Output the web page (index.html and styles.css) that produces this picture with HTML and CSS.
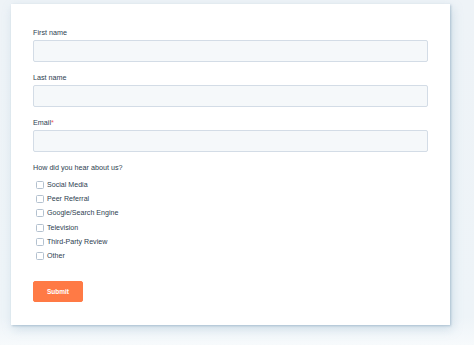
FILE: index.html
```html
<!DOCTYPE html>
<html>
<head>
<meta charset="utf-8">
<link rel="stylesheet" href="styles.css">
</head>
<body>
<div class="page">
  <form class="card">
    <div class="field">
      <label class="label">First name</label>
      <div class="input"></div>
    </div>
    <div class="field">
      <label class="label">Last name</label>
      <div class="input"></div>
    </div>
    <div class="field">
      <label class="label">Email<span class="req">*</span></label>
      <div class="input"></div>
    </div>
    <div class="group">
      <div class="label">How did you hear about us?</div>
      <ul class="options">
        <li class="option"><span class="box"></span>Social Media</li>
        <li class="option"><span class="box"></span>Peer Referral</li>
        <li class="option"><span class="box"></span>Google/Search Engine</li>
        <li class="option"><span class="box"></span>Television</li>
        <li class="option"><span class="box"></span>Third-Party Review</li>
        <li class="option"><span class="box"></span>Other</li>
      </ul>
    </div>
    <div class="actions">
      <button type="button" class="submit">Submit</button>
    </div>
  </form>
</div>
</body>
</html>
```
FILE: styles.css
```css
html, body {
  margin: 0;
  padding: 0;
}
body {
  width: 474px;
  height: 345px;
  overflow: hidden;
  background: linear-gradient(180deg, #eef3f7 0%, #eef4f8 92%, #f7fafc 100%);
  font-family: "Liberation Sans", Arial, sans-serif;
  color: #33475b;
}
.page {
  padding: 4px 24px 0 11px;
}
.card {
  box-sizing: border-box;
  width: 439px;
  height: 321px;
  background: #ffffff;
  padding: 23px 22px 0 22px;
  box-shadow: 1px 1px 2px rgba(120, 150, 175, 0.45), 2px 4px 10px rgba(140, 175, 200, 0.35);
  display: flex;
  flex-direction: column;
}
.field {
  display: flex;
  flex-direction: column;
  margin-bottom: 10px;
}
.label {
  font-size: 7.2px;
  line-height: 10px;
  height: 10px;
  padding-top: 1px;
  margin-bottom: 2px;
  color: #2d3e50;
}
.req {
  color: #f2545b;
}
.input {
  box-sizing: border-box;
  height: 22px;
  background: #f5f8fa;
  border: 1px solid #d3dce6;
  border-radius: 2px;
}
.group .label {
  margin-bottom: 5px;
}
.options {
  list-style: none;
  margin: 0;
  padding: 0;
}
.option {
  display: flex;
  align-items: center;
  height: 14.2px;
  font-size: 7.1px;
  color: #2d3e50;
  padding-left: 3px;
}
.box {
  box-sizing: border-box;
  width: 8px;
  height: 8px;
  border: 1px solid #b3c1cf;
  border-radius: 1.5px;
  background: #fff;
  margin-right: 3px;
  flex: none;
}
.actions {
  margin-top: 17px;
}
.submit {
  box-sizing: border-box;
  width: 50px;
  height: 21px;
  background: #ff7a45;
  border: 1px solid #ff7a45;
  border-radius: 2px;
  color: #ffffff;
  font-family: "Liberation Sans", Arial, sans-serif;
  font-weight: bold;
  font-size: 6.5px;
  padding: 0;
  cursor: pointer;
}
```
